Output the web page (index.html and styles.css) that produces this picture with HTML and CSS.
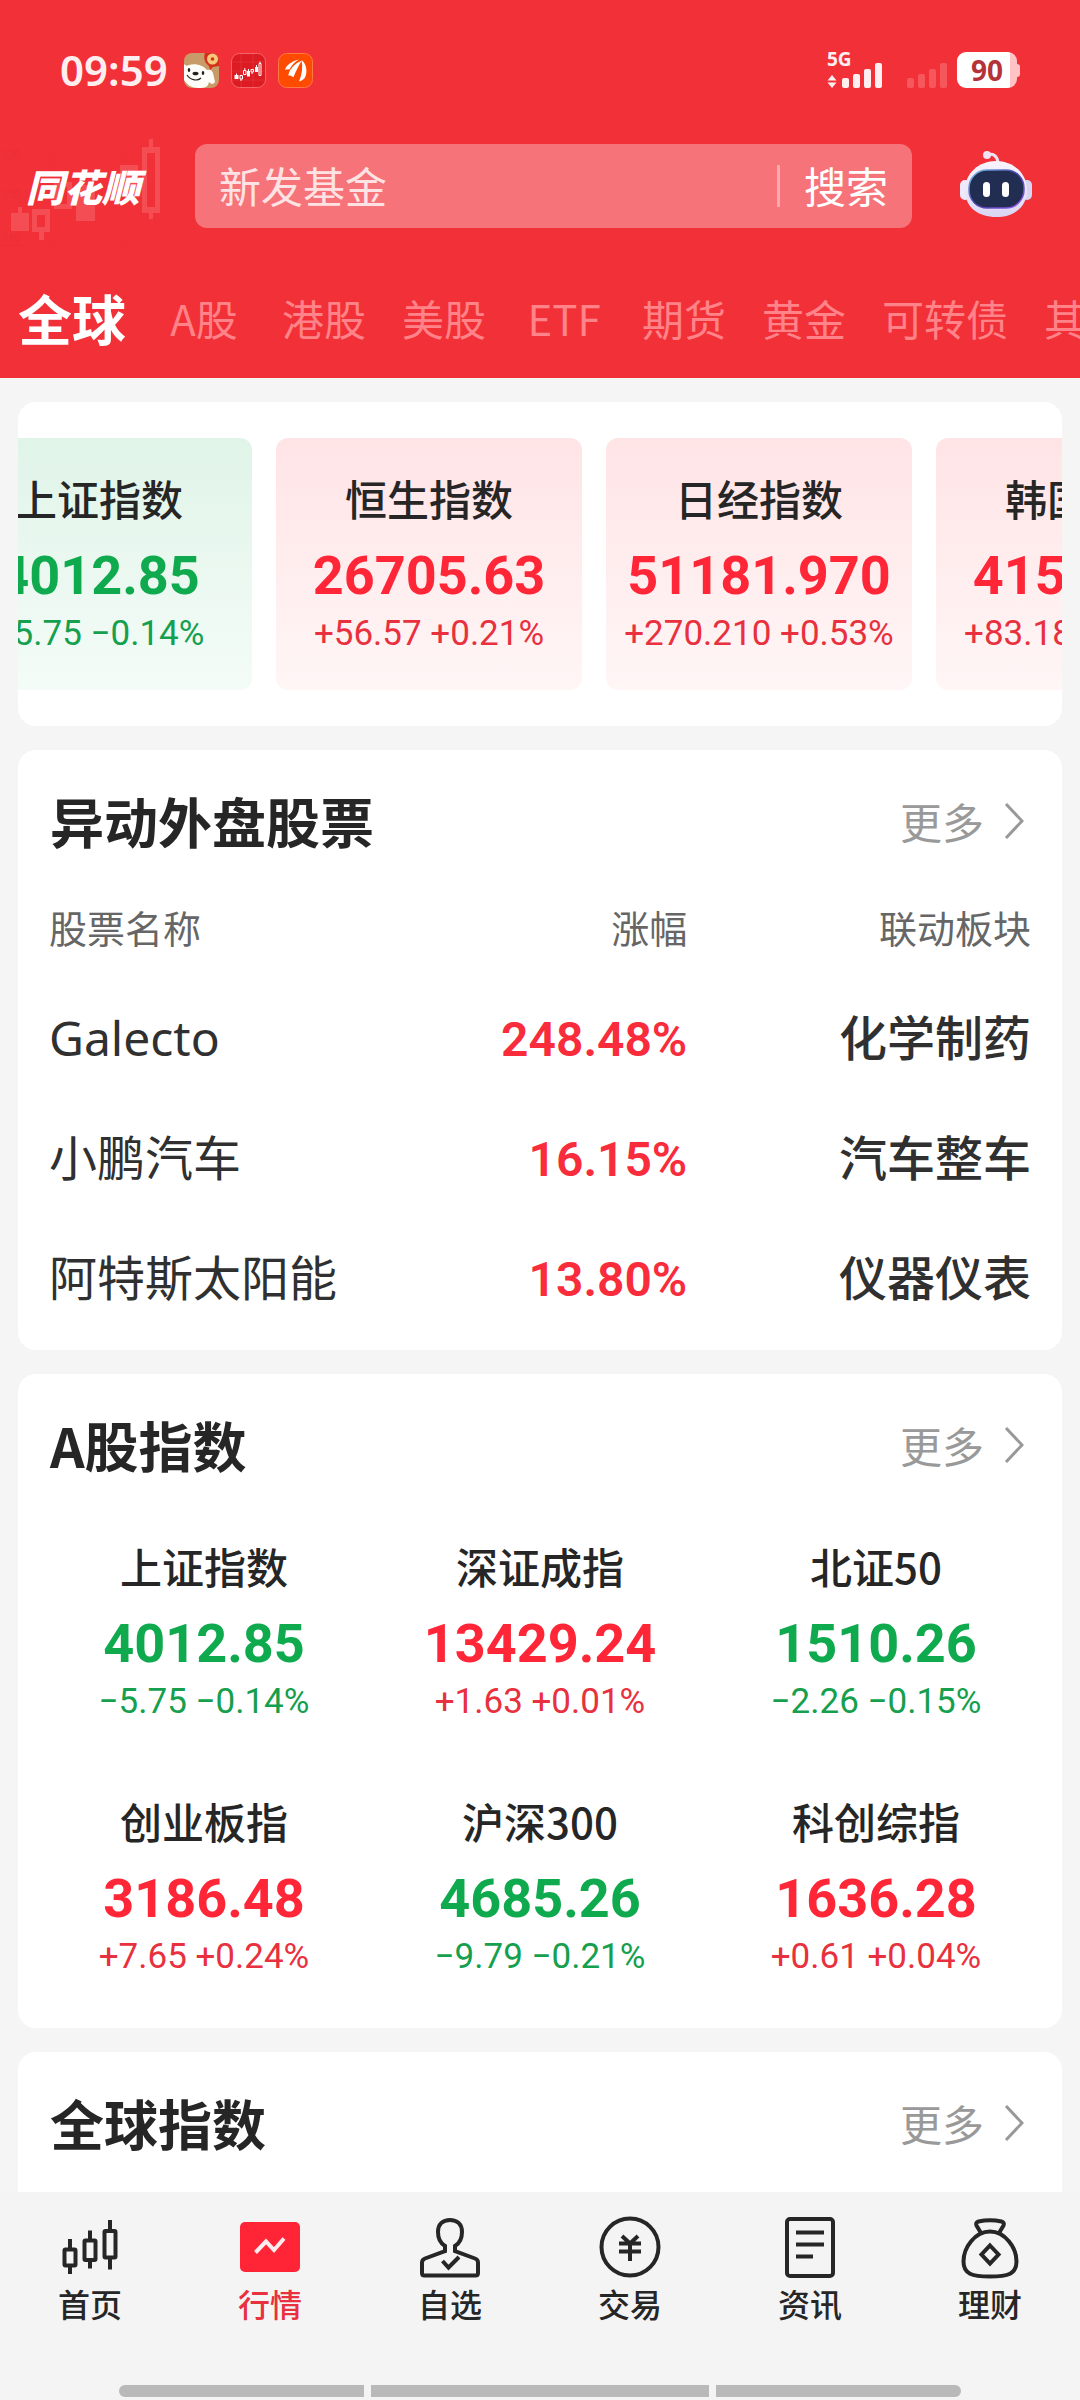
FILE: index.html
```html
<!DOCTYPE html>
<html lang="zh-CN">
<head>
<meta charset="utf-8">
<meta name="viewport" content="width=device-width, initial-scale=1">
<title>同花顺 行情</title>
<link rel="stylesheet" href="styles.css">
</head>
<body>
<header class="top">
  <div class="status">
    <span class="clock">09:59</span>
    <span class="apps">
      <svg class="app" viewBox="0 0 35 35" aria-hidden="true">
        <defs><clipPath id="c1"><rect width="35" height="35" rx="8"/></clipPath></defs>
        <g clip-path="url(#c1)">
          <rect width="35" height="35" fill="#c89c69"/>
          <path d="M21 0h14v13l-6 1-3 3-1-4c-4-3-6-8-4-13z" fill="#d5301c"/>
          <circle cx="28.500" cy="6" r="5.500" fill="#f6c77a"/><circle cx="28.500" cy="6" r="1.800" fill="#d5301c"/>
          <path d="M0 11c2 2 3 2 5 1 6-2 14 0 18 5 3-1 5 0 6 3l2 9c-2 3-4 2-6 0l-1 3c-2 3-6 3-10 3-6 0-11-3-14-8z" fill="#fffdf8"/>
          <ellipse cx="5" cy="17" rx="1.300" ry="1.900" fill="#222"/><ellipse cx="19" cy="20" rx="1.300" ry="1.900" fill="#222"/>
          <ellipse cx="11.500" cy="20.500" rx="3" ry="1.800" fill="#222"/>
          <path d="M3 22c4 6 11 6 14 3" fill="none" stroke="#222" stroke-width="1.200"/>
        </g>
      </svg>
      <svg class="app" viewBox="0 0 35 35" aria-hidden="true">
        <rect x=".5" y=".5" width="34" height="34" rx="8" fill="#dc1c22" stroke="#f4666a"/>
        <path d="M1 9h33M1 18h33M1 27h33M10 1v33M22 1v33" stroke="#e63a40" stroke-width=".6"/>
        <g fill="#fff"><path d="M3.500 22h4v4h-4zM5 20.500h1V22H5zM16 18h3v5.500h-3zM17 16h1v2h-1zM24 14h3v5h-3zM25 12h1v2h-1z"/></g>
        <g fill="none" stroke="#fff"><path d="M9 22.500h2.500v3.500H9zM10 26v2M12.500 17.500H15v4h-2.500zM13.800 15v2M20 16.500h2.500V19H20zM21 19v2M28 10.500h2v12h-2zM29 8.500v2"/></g>
      </svg>
      <svg class="app" viewBox="0 0 35 35" aria-hidden="true">
        <rect x=".5" y=".5" width="34" height="34" rx="8" fill="#ff4b00" stroke="#ff7a45"/>
        <path d="M7 17C8 12 14 8 21 6.500 16 9.500 13 13 11.500 16.500 10 16 8.500 16.500 7 17z" fill="#fff"/>
        <path d="M13 24.500C13 17 17 10.500 22.500 7 20.500 13 19.500 19 18.500 25c-2-1-3.500-1-5.500-.5z" fill="#fff" transform="rotate(14 20 12)"/>
        <path d="M21 28.500c3-7 4-14 2.500-21.500C29 11 29.500 20 27 24.500c-1.500 2-3.500 3.500-6 4z" fill="#fff"/>
      </svg>
    </span>
    <span class="signals">
      <svg class="signal" viewBox="0 0 122 36" role="img" aria-label="5G">
        <text class="net" x="0" y="14">5G</text>
        <g fill="#ffeff0">
          <path d="M5 23l4.500 5.500h-9zM5 36l4.500-5.500h-9z"/>
          <rect x="15" y="26" width="7" height="10" rx="2"/><rect x="26" y="22" width="7" height="14" rx="2"/><rect x="37" y="17" width="7" height="19" rx="2"/><rect x="48" y="11" width="7" height="25" rx="2"/>
        </g>
        <g fill="#f6575d">
          <rect x="80" y="26" width="7" height="10" rx="2"/><rect x="91" y="22" width="7" height="14" rx="2"/><rect x="102" y="17" width="7" height="19" rx="2"/><rect x="113" y="11" width="7" height="25" rx="2"/>
        </g>
      </svg>
      <span class="battery">90</span>
    </span>
  </div>
  <div class="bar">
    <div class="brand">
      <svg class="brand-art" viewBox="0 0 180 160" aria-hidden="true">
        <path d="M0 50h170M0 93h170M0 135h170M51 5v145M123 5v145" stroke="#ee2f37" fill="none"/>
        <g class="scale"><text x="3" y="48">130</text><text x="3" y="88">120</text><text x="3" y="132">110</text></g>
        <g fill="#f54d54">
          <path d="M11 103h18v18H11zM18 97h4v6h-4zM76 75h19v36H76zM120 55h18v30h-18z"/>
          <path fill-rule="evenodd" d="M32 99h18v23h-6v8h-5v-8h-7zM37 105v12h8v-12zM54 72h18v27H54zM59 77v17h8V77zM142 37h7v-8h4v8h7v66h-7v6h-4v-6h-7zM147 43v54h8V43z"/>
        </g>
      </svg>
      <span class="brand-name">同花顺</span>
    </div>
    <form class="search" onsubmit="return false">
      <input class="search-input" type="search" aria-label="搜索" placeholder="新发基金">
      <button class="search-go" type="submit">搜索</button>
    </form>
    <button class="robot" type="button" aria-label="智能助手">
      <svg viewBox="0 0 72 70" aria-hidden="true">
        <defs>
          <linearGradient id="shell" x1="0" y1="0" x2="0" y2="1"><stop offset="0" stop-color="#f8f3fb"/><stop offset=".7" stop-color="#e6e2f8"/><stop offset="1" stop-color="#d9d5f3"/></linearGradient>
          <linearGradient id="rim" x1="0" y1="0" x2="1" y2="1"><stop offset="0" stop-color="#7fc9e8"/><stop offset=".5" stop-color="#4a3fb0"/><stop offset="1" stop-color="#9a5cf0"/></linearGradient>
        </defs>
        <path d="M28 4c5-2 9 1 10 7" fill="none" stroke="#efe2f2" stroke-width="3"/>
        <circle cx="27" cy="4" r="4" fill="#f1e3f4"/>
        <rect x="0" y="29" width="10" height="20" rx="5" fill="#eeeafa"/><rect x="62" y="29" width="10" height="20" rx="5" fill="#d8d5f2"/>
        <path d="M36 10c17 0 31 12 31 29 0 18-14 27-31 27S5 57 5 39c0-17 14-29 31-29z" fill="url(#shell)"/>
        <rect x="9" y="19" width="55" height="38" rx="18" fill="#222d52" stroke="url(#rim)" stroke-width="1.500"/>
        <rect x="23" y="31" width="7" height="15" rx="3.500" fill="#fff"/><rect x="42" y="31" width="7" height="15" rx="3.500" fill="#fff"/>
      </svg>
    </button>
  </div>
  <nav class="tabs" aria-label="市场">
    <a class="tab on" href="#">全球</a><a class="tab" href="#">A股</a><a class="tab" href="#">港股</a><a class="tab" href="#">美股</a><a class="tab" href="#">ETF</a><a class="tab" href="#">期货</a><a class="tab" href="#">黄金</a><a class="tab" href="#">可转债</a><a class="tab" href="#">其他</a>
  </nav>
</header>

<main class="content">
  <section class="card strip" aria-label="主要指数">
    <div class="track">
      <article class="quote tile down"><h3 class="name">上证指数</h3><p class="price">4012.85</p><p class="delta">−5.75 −0.14%</p></article>
      <article class="quote tile up"><h3 class="name">恒生指数</h3><p class="price">26705.63</p><p class="delta">+56.57 +0.21%</p></article>
      <article class="quote tile up"><h3 class="name">日经指数</h3><p class="price">51181.970</p><p class="delta">+270.210 +0.53%</p></article>
      <article class="quote tile up"><h3 class="name">韩国指数</h3><p class="price">4150.390</p><p class="delta">+83.180 +2.04%</p></article>
    </div>
  </section>

  <section class="card">
    <div class="head"><h2 class="title">异动外盘股票</h2><a class="more" href="#">更多<svg class="chev" viewBox="0 0 20 36" aria-hidden="true"><path d="M2 1l16 17L2 35"/></svg></a></div>
    <div class="table-wrap">
      <table class="movers">
        <thead><tr><th class="c-name" scope="col">股票名称</th><th class="c-pct" scope="col">涨幅</th><th class="c-sector" scope="col">联动板块</th></tr></thead>
        <tbody>
          <tr><td class="c-name latin">Galecto</td><td class="c-pct">248.48%</td><td class="c-sector">化学制药</td></tr>
          <tr><td class="c-name">小鹏汽车</td><td class="c-pct">16.15%</td><td class="c-sector">汽车整车</td></tr>
          <tr><td class="c-name">阿特斯太阳能</td><td class="c-pct">13.80%</td><td class="c-sector">仪器仪表</td></tr>
        </tbody>
      </table>
    </div>
  </section>

  <section class="card">
    <div class="head"><h2 class="title">A股指数</h2><a class="more" href="#">更多<svg class="chev" viewBox="0 0 20 36" aria-hidden="true"><path d="M2 1l16 17L2 35"/></svg></a></div>
    <div class="grid">
      <article class="quote down"><h3 class="name">上证指数</h3><p class="price">4012.85</p><p class="delta">−5.75 −0.14%</p></article>
      <article class="quote up"><h3 class="name">深证成指</h3><p class="price">13429.24</p><p class="delta">+1.63 +0.01%</p></article>
      <article class="quote down"><h3 class="name">北证50</h3><p class="price">1510.26</p><p class="delta">−2.26 −0.15%</p></article>
      <article class="quote up"><h3 class="name">创业板指</h3><p class="price">3186.48</p><p class="delta">+7.65 +0.24%</p></article>
      <article class="quote down"><h3 class="name">沪深300</h3><p class="price">4685.26</p><p class="delta">−9.79 −0.21%</p></article>
      <article class="quote up"><h3 class="name">科创综指</h3><p class="price">1636.28</p><p class="delta">+0.61 +0.04%</p></article>
    </div>
  </section>

  <section class="card last">
    <div class="head"><h2 class="title">全球指数</h2><a class="more" href="#">更多<svg class="chev" viewBox="0 0 20 36" aria-hidden="true"><path d="M2 1l16 17L2 35"/></svg></a></div>
  </section>
</main>

<footer class="dock">
  <nav class="dock-nav" aria-label="主导航">
    <a class="dock-item" href="#"><svg class="ico" viewBox="0 0 64 64" aria-hidden="true"><rect x="6.500" y="34.500" width="11" height="16" rx="1"/><path d="M12 24v10M12 51v8"/><rect x="26.500" y="25.500" width="11" height="19.500" rx="1"/><path d="M32 15.500V25M32 46v7.500"/><rect x="46.500" y="16" width="11" height="26.500" rx="1"/><path d="M52 5v10M52 43v11.500"/></svg>首页</a>
    <a class="dock-item on" href="#" aria-current="page"><svg class="ico" viewBox="0 0 64 64" aria-hidden="true"><rect x="2" y="7" width="60" height="50" rx="5" fill="#ff2436" stroke="none"/><path d="M17.500 37.500L28 26.500l8 8.500 10-11.500" stroke="#ffecee"/></svg>行情</a>
    <a class="dock-item" href="#"><svg class="ico" viewBox="0 0 64 64" aria-hidden="true"><path d="M27 36v-5c-5-3-7-7-7-14 0-8 5-12 12-12s12 4 12 12c0 7-2 11-7 14v5l20 7.500c2 .8 3 2 3 4V58q0 2.500-2.500 2.500h-51Q4 60.500 4 58V47.500c0-2 1-3.200 3-4z"/><path d="M24.500 46l6 6.500L41 42"/></svg>自选</a>
    <a class="dock-item" href="#"><svg class="ico" viewBox="0 0 64 64" aria-hidden="true"><circle cx="32" cy="32" r="28.500"/><path d="M24 21l8 7.500 8-7.500M21 28.500h22M21 36.500h22M32 28v18"/></svg>交易</a>
    <a class="dock-item" href="#"><svg class="ico" viewBox="0 0 64 64" aria-hidden="true"><rect x="9" y="4" width="46" height="57" rx="3"/><path d="M18 17.500h28M18 29.500h28M18 41.500h17"/></svg>资讯</a>
    <a class="dock-item" href="#"><svg class="ico" viewBox="0 0 64 64" aria-hidden="true"><path d="M23 18l-4.500-7.500c-1-2 0-3.500 2-4 7-1.500 16-1.500 23 0 2 .5 3 2 2 4L41 18"/><path d="M32 16.500c15 0 26.500 16 26.500 30C58.500 59 50 61.500 32 61.500S5.500 59 5.500 46.500c0-14 11.500-30 26.500-30z"/><path d="M32 30.500l8.500 9-8.500 9-8.500-9z"/></svg>理财</a>
  </nav>
  <div class="gesture" aria-hidden="true"><i></i><i class="mid"></i><i></i></div>
</footer>
</body>
</html>
```
FILE: styles.css
```css
* { box-sizing: border-box; }

body {
  margin: 0;
  height: 100vh;
  display: flex;
  flex-direction: column;
  overflow: hidden;
  background: #f5f5f5;
  color: #262626;
  font-family: "Noto Sans CJK SC", sans-serif;
}

h2, h3, p { margin: 0; }
a { color: inherit; text-decoration: none; }
svg { display: block; }
button { border: 0; padding: 0; background: none; font-family: inherit; }

/* header */
.top { flex: none; background: #f23037; color: #fff; overflow: hidden; }

.status {
  display: flex;
  align-items: center;
  height: 110px;
  padding: 32px 63px 0 60px;
}
.clock {
  font: 600 42px/60px "Noto Sans", sans-serif;
  color: #ffeef0;
}
.apps { display: flex; gap: 12px; margin-left: 16px; }
.app { width: 35px; height: 35px; }
.signals { display: flex; align-items: center; gap: 8px; margin-left: auto; }
.signal { width: 122px; height: 36px; overflow: visible; }
.net { font: 700 19px "Noto Sans", sans-serif; fill: #ffeff0; }
.battery {
  position: relative;
  width: 60px;
  height: 36px;
  border-radius: 9px;
  background: linear-gradient(to right, #fff 53px, #ffc3c6 53px);
  color: #b43238;
  font: 700 28px/36px "Noto Sans", sans-serif;
  text-align: center;
}
.battery::after {
  content: "";
  position: absolute;
  left: 60px;
  top: 12px;
  width: 3px;
  height: 13px;
  border-radius: 0 3px 3px 0;
  background: #ffc3c6;
}
.status { padding-top: 30px; }

.bar { display: flex; align-items: center; height: 160px; padding-bottom: 8px; }
.brand {
  flex: none;
  position: relative;
  width: 195px;
  padding-left: 26px;
}
.brand-art { position: absolute; left: 0; top: -48px; width: 180px; height: 160px; }
.scale { font: 10px Roboto, sans-serif; fill: #e92f38; }
.brand-name {
  position: relative;
  display: block;
  font-size: 38px;
  font-weight: 900;
  font-style: italic;
  line-height: 56px;
}
.search {
  flex: 1;
  min-width: 0;
  display: flex;
  align-items: center;
  height: 84px;
  border-radius: 12px;
  background: #f67379;
}
.search-input {
  flex: 1;
  min-width: 0;
  height: 80px;
  padding: 0 0 4px 24px;
  border: 0;
  outline: 0;
  background: none;
  color: #fff;
  font: 42px "Noto Sans CJK SC", sans-serif;
}
.search-input::placeholder { color: #ffe3e4; opacity: 1; }
.search-go {
  height: 42px;
  padding: 0 24px 2px;
  border-left: 3px solid #fba9ac;
  color: #fff;
  font-size: 42px;
  line-height: 40px;
}
.robot { flex: none; width: 72px; height: 70px; margin: 0 48px; }

.tabs {
  display: flex;
  align-items: center;
  gap: 36px;
  height: 108px;
  padding: 0 18px 12px;
  white-space: nowrap;
}
.tab {
  flex: none;
  min-width: 84px;
  text-align: center;
  font-size: 42px;
  line-height: 72px;
  color: #ff8388;
}
.tab.on { font-size: 54px; font-weight: 700; color: #fff; }

/* cards */
.content {
  flex: 1;
  min-height: 0;
  overflow: hidden;
  display: flex;
  flex-direction: column;
  gap: 24px;
  padding: 24px 18px 0;
}
.card { flex: none; border-radius: 18px; background: #fff; overflow: hidden; }
.last { min-height: 240px; }

.strip { padding: 36px 0; }
.track { display: flex; gap: 24px; margin-left: -72px; }

.quote { padding: 34px 0; text-align: center; white-space: nowrap; }
.name { margin-bottom: 16px; font-size: 42px; font-weight: 500; line-height: 52px; }
.price { font: 700 54px/72px Roboto, sans-serif; }
.delta { font: 400 35px/44px Roboto, sans-serif; }
.up .price { color: #ff2638; }
.up .delta { color: #e8303e; }
.down .price { color: #0fa94e; }
.down .delta { color: #159f4e; }

.tile { flex: 0 0 306px; border-radius: 12px; }
.tile.up { background: linear-gradient(#ffe4e6, #fff6f6); }
.tile.down { background: linear-gradient(#e0f4e8, #f4fcf8); }

.head {
  display: flex;
  align-items: center;
  justify-content: space-between;
  padding: 35px 38px 25px 32px;
}
.title { font-size: 54px; font-weight: 700; line-height: 72px; }
.more {
  display: flex;
  align-items: center;
  gap: 20px;
  font-size: 42px;
  line-height: 72px;
  color: #999;
}
.chev { width: 20px; height: 36px; fill: none; stroke: #999; stroke-width: 3; }

.table-wrap { padding: 0 31px 15px; }
.movers { width: 100%; border-collapse: collapse; table-layout: fixed; }
.movers th, .movers td { text-align: right; }
.movers th {
  height: 93px;
  padding: 0 0 4px;
  font-size: 38px;
  font-weight: 400;
  color: #666;
}
.movers td {
  padding: 24px 0;
  font-size: 48px;
  line-height: 72px;
  vertical-align: baseline;
  color: #303030;
}
.movers .c-name { width: 35%; text-align: left; }
.movers .c-pct { width: 30%; }
.movers td.c-pct {
  font-family: Roboto, sans-serif;
  font-weight: 600;
  line-height: 60px;
  color: #f92c3c;
}
.movers td.c-sector { font-weight: 500; }
.movers td.latin { font-family: "Noto Sans", sans-serif; line-height: 60px; }

.grid {
  display: grid;
  grid-template-columns: repeat(3, 1fr);
  row-gap: 3px;
  padding: 0 18px 15px;
}

/* bottom dock */
.dock { flex: none; background: #f4f4f4; }
.dock-nav { display: grid; grid-template-columns: repeat(6, 1fr); padding-top: 23px; }
.dock-item {
  display: flex;
  flex-direction: column;
  align-items: center;
  gap: 4px;
  font-size: 32px;
  font-weight: 500;
  line-height: 40px;
}
.dock-item.on { color: #e8303e; }
.ico { width: 64px; height: 64px; fill: none; stroke: #262626; stroke-width: 4; }
.gesture { display: flex; gap: 7px; padding: 62px 119px 3px; }
.gesture i { flex: 245; height: 12px; background: #b9b9b9; }
.gesture .mid { flex: 338; }
.gesture i:first-child { border-radius: 6px 0 0 6px; }
.gesture i:last-child { border-radius: 0 6px 6px 0; }
```
